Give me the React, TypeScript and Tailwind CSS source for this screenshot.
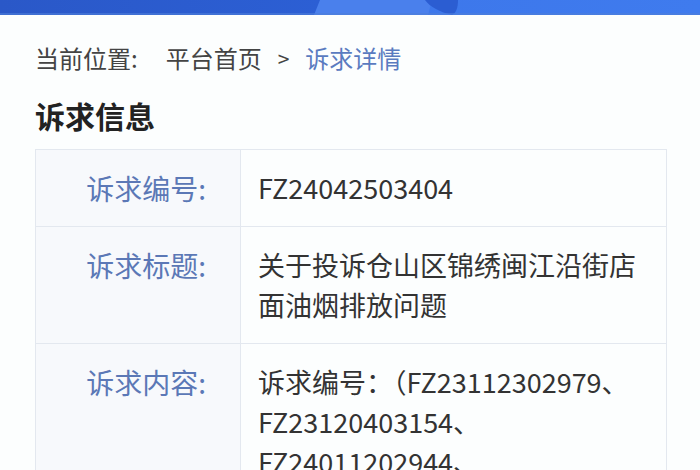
const rows: { label: string; lines: string[] }[] = [
  { label: '诉求编号:', lines: ['FZ24042503404'] },
  { label: '诉求标题:', lines: ['关于投诉仓山区锦绣闽江沿街店面油烟排放问题'] },
  {
    label: '诉求内容:',
    lines: ['诉求编号：（FZ23112302979、', 'FZ23120403154、', 'FZ24011202944、', 'FZ24021802117）'],
  },
];

function Banner() {
  return (
    <div className="h-[15px] w-full overflow-hidden">
      <svg width="700" height="15" viewBox="0 0 700 15" preserveAspectRatio="none">
        <defs>
          <linearGradient id="left" x1="0" x2="1" y1="0" y2="0">
            <stop offset="0" stopColor="#2a58c8" />
            <stop offset="1" stopColor="#2c5fd4" />
          </linearGradient>
          <linearGradient id="right" x1="0" x2="1" y1="0" y2="0">
            <stop offset="0" stopColor="#3a72e6" />
            <stop offset="1" stopColor="#3f7bee" />
          </linearGradient>
        </defs>
        <rect x="0" y="0" width="700" height="15" fill="url(#right)" />
        <rect x="0" y="0" width="320" height="15" fill="url(#left)" />
        <path d="M320 0 L432 0 L428 15 L314 15 Z" fill="#4a80ec" />
        <path d="M425 0 L458 0 C458 8 456 13 452 15 C440 12 430 7 425 0 Z" fill="#2b5dd2" />
        <rect x="0" y="13" width="700" height="2" fill="#4f7fd8" opacity="0.6" />
      </svg>
    </div>
  );
}

export default function App() {
  return (
    <div
      className="w-[700px] h-[470px] overflow-hidden bg-[#fcfefe]"
      style={{ fontFamily: '"Noto Sans CJK SC", "Noto Sans", sans-serif' }}
    >
      <Banner />

      <div className="px-[35px]">
        {/* breadcrumb */}
        <div className="mt-[27px] flex items-center text-[24px] leading-[32px] text-[#444]">
          <span>当前位置:</span>
          <span className="ml-[28px]">平台首页</span>
          <span className="ml-[16px] text-[21px]">&gt;</span>
          <span className="ml-[16px] text-[#5a7bc0]">诉求详情</span>
        </div>

        {/* title */}
        <h2 className="mt-[22px] text-[30px] leading-[38px] font-bold text-[#222]">诉求信息</h2>

        {/* info table */}
        <div className="mt-[15px] w-[632px] border border-[#e3e8ef]">
          {rows.map((row, i) => (
            <div
              key={row.label}
              className={`grid grid-cols-[205px_1fr] ${i > 0 ? 'border-t border-[#e3e8ef]' : ''}`}
            >
              <div className="bg-[#f7f9fc] border-r border-[#e3e8ef] pt-[18px] pb-[18px] pr-[34px] text-right text-[28px] leading-[40px] text-[#5b78b6]">
                {row.label}
              </div>
              <div className="pl-[17px] pr-[20px] py-[18px] text-[27px] leading-[40px] text-[#333]">
                {row.lines.map((line) => (
                  <div key={line}>{line}</div>
                ))}
              </div>
            </div>
          ))}
        </div>
      </div>
    </div>
  );
}
